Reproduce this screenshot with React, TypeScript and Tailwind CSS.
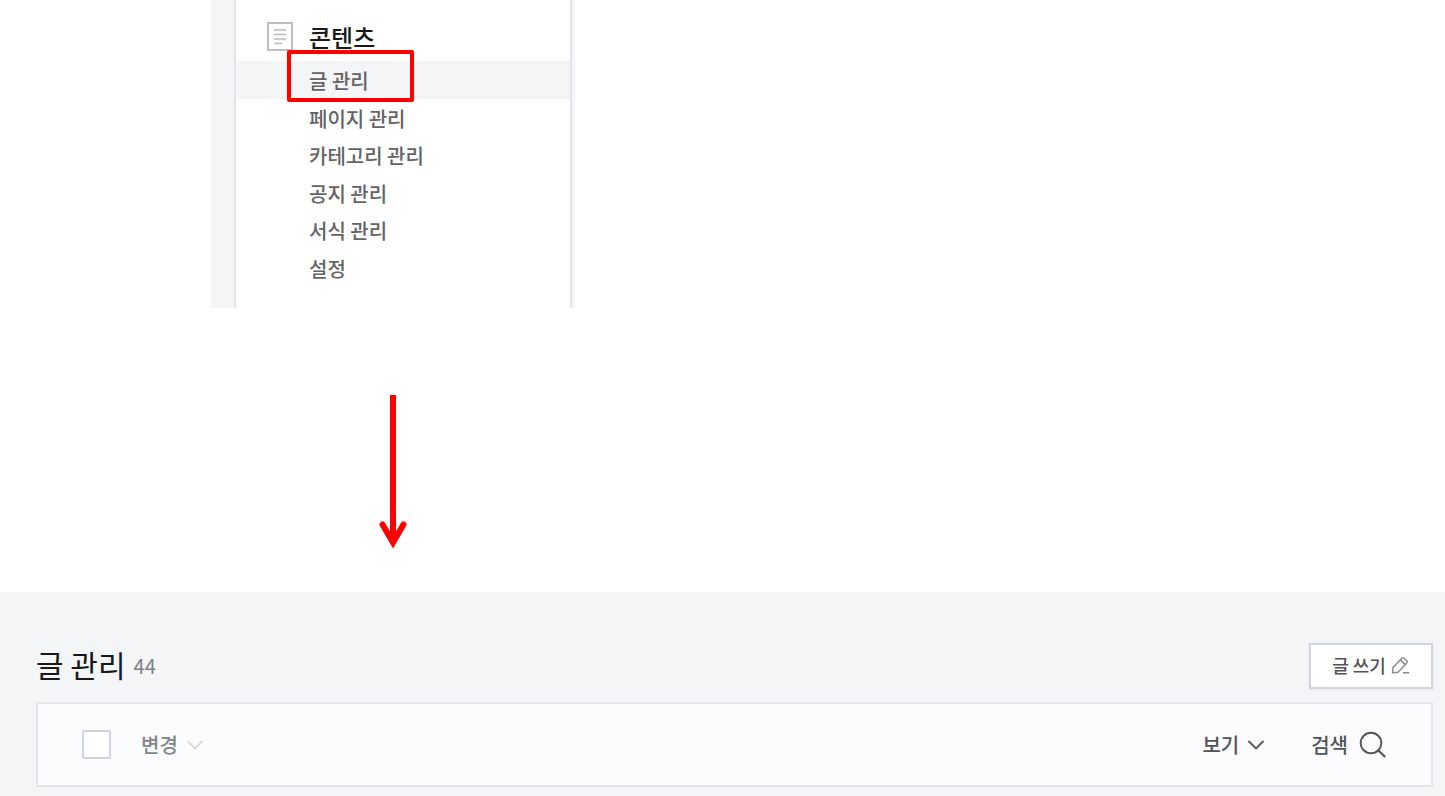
const menuItems = ['글 관리', '페이지 관리', '카테고리 관리', '공지 관리', '서식 관리', '설정'];

function ContentIcon() {
  return (
    <svg width="26" height="29" viewBox="0 0 26 29" fill="none" aria-hidden="true">
      <rect x="1" y="1" width="24" height="27" stroke="#b9b9bb" strokeWidth="1.800" />
      <path d="M7 8h12M7 12.500h12M7 17h12M7 21.500h8" stroke="#bcbcbe" strokeWidth="1.700" />
    </svg>
  );
}

function PencilIcon() {
  return (
    <svg width="20" height="20" viewBox="0 0 20 20" fill="none" stroke="#8b8b8d" strokeWidth="1.500" strokeLinejoin="round" aria-hidden="true">
      <path d="M3 12.500 11.800 3.200Q13 2.200 14.200 3.200L16.800 5.700Q17.800 6.800 16.800 8L8 17.200 2.600 17.800Z" />
      <path d="M10.300 4.900 15.300 9.600M13 17.800H19.200" />
    </svg>
  );
}

function ChevronIcon({ className }: { className: string }) {
  return (
    <svg width="18" height="12" viewBox="0 0 18 12" fill="none" className={className} aria-hidden="true">
      <path d="m1.500 2 7.500 7.500L16.500 2" stroke="currentColor" strokeWidth="1.800" />
    </svg>
  );
}

function SearchIcon() {
  return (
    <svg width="28" height="28" viewBox="0 0 28 28" fill="none" stroke="#555557" strokeWidth="1.900" aria-hidden="true">
      <circle cx="12" cy="12" r="10.300" />
      <path d="m19.200 19.200 7 6.800" strokeWidth="2.200" />
    </svg>
  );
}

function DownArrow() {
  return (
    <svg width="28" height="154" viewBox="0 0 28 154" fill="none" stroke="#ff0000" aria-hidden="true">
      <path d="M14 0v146" strokeWidth="6" />
      <path d="m3.500 129.500 10.500 18 10.500-18" strokeWidth="6" strokeLinecap="round" />
    </svg>
  );
}

export default function App() {
  return (
    <main className="flex min-h-screen flex-col bg-white font-['Noto_Sans_CJK_KR','Noto_Sans',sans-serif]">
      <aside className="ml-[211px] flex h-[308px] w-[364px] border-r-3 border-[#f5f5fc] bg-[#f4f5f7] pl-[23px]">
        <nav aria-label="콘텐츠" className="w-full border-r-2 border-l-2 border-[#e4e5ea] bg-white">
          <div className="flex h-[61px] items-end gap-4 pb-[10px] pl-[31px]">
            <ContentIcon />
            <h2 className="text-2xl leading-7 font-medium text-[#18181a]">콘텐츠</h2>
          </div>
          <ul className="grid h-[225px] grid-rows-6 text-xl leading-7 font-medium text-[#636365]">
            {menuItems.map((item, index) => (
              <li key={item} className={index === 0 ? 'relative bg-[#f4f5f7]' : ''}>
                <a href="#posts" aria-current={index === 0 ? 'page' : undefined} className="flex h-full items-center pt-[3px] pl-[73px]">
                  {item}
                </a>
                {index === 0 && (
                  <span className="pointer-events-none absolute -top-[11px] left-[51px] h-[52px] w-[127px] rounded-xs border-4 border-[#ff0000]" />
                )}
              </li>
            ))}
          </ul>
        </nav>
      </aside>

      <div className="h-[284px] pt-[87px] pl-[379px]">
        <DownArrow />
      </div>

      <section id="posts" className="flex-1 bg-[#f4f5f7] pt-[51px] pr-3 pb-2 pl-9">
        <header className="flex items-center justify-between">
          <h1 className="flex items-center gap-2 pb-1 text-3xl leading-10 font-normal text-[#18181a]">
            글 관리 <span className="pt-1 text-xl text-[#818183]">44</span>
          </h1>
          <button type="button" className="flex h-[46px] w-[124px] items-center justify-center gap-1 border-2 border-[#cfd4de] bg-white pb-[2px] text-lg font-medium text-[#535355] shadow-xs">
            글 쓰기 <PencilIcon />
          </button>
        </header>

        <div className="mt-[13px] flex h-[85px] items-center justify-between border-2 border-[#e4e6ea] bg-[#fbfcfe] px-11 text-xl font-medium">
          <div className="flex items-center gap-[30px]">
            <input type="checkbox" aria-label="전체 선택" className="size-[29px] appearance-none rounded-xs border-2 border-[#d0d2df] bg-white" />
            <button type="button" className="flex items-center gap-2 text-[#858587]">
              변경 <ChevronIcon className="text-[#d9dadc]" />
            </button>
          </div>
          <div className="flex items-center gap-[46px] text-[#535355]">
            <button type="button" className="flex items-center gap-2">
              보기 <ChevronIcon className="text-[#555557]" />
            </button>
            <button type="button" className="flex items-center gap-[11px]">
              검색 <SearchIcon />
            </button>
          </div>
        </div>
      </section>
    </main>
  );
}
